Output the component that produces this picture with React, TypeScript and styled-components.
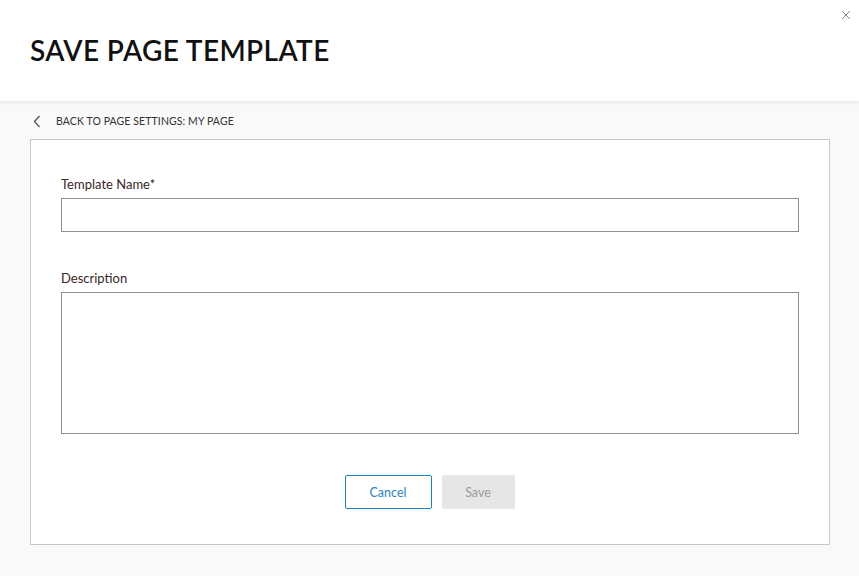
import React from "react";
import styled, { createGlobalStyle } from "styled-components";

const Global = createGlobalStyle`
  html, body { margin: 0; padding: 0; background: #f9f9f9; }
  body { font-family: Lato, "Liberation Sans", sans-serif; }
  * { box-sizing: border-box; }
`;

const Page = styled.div`
  width: 859px;
  height: 576px;
  display: flex;
  flex-direction: column;
  background: #f9f9f9;
  position: relative;
`;

const Header = styled.header`
  height: 102px;
  background: #ffffff;
  box-shadow: 0 1px 2px rgba(0, 0, 0, 0.08);
  border-bottom: 1px solid #ececec;
  display: flex;
  align-items: center;
  padding: 0 30px 2px;
`;

const Title = styled.h1`
  margin: 0;
  font-family: Lato, "Liberation Sans", sans-serif;
  font-weight: 600;
  font-size: 28px;
  letter-spacing: 0.4px;
  color: #111;
`;

const Close = styled.button`
  position: absolute;
  top: 9px;
  right: 7px;
  width: 12px;
  height: 12px;
  padding: 0;
  border: none;
  background: none;
  display: flex;
  align-items: center;
  justify-content: center;
  cursor: pointer;
`;

const Body = styled.main`
  padding: 0 29px 31px 30px;
  display: flex;
  flex-direction: column;
  flex: 1;
`;

const BackRow = styled.div`
  height: 37px;
  display: flex;
  align-items: center;
  gap: 15px;
  padding-left: 3px;
  padding-top: 1px;
`;

const BackText = styled.span`
  font-family: Lato, "Liberation Sans", sans-serif;
  font-size: 10.5px;
  color: #333;
  letter-spacing: 0.1px;
`;

const Card = styled.section`
  flex: 1;
  background: #fff;
  border: 1px solid #c8c8c8;
  padding: 37px 30px 0;
  display: flex;
  flex-direction: column;
`;

const Field = styled.div<{ $gap?: number }>`
  display: flex;
  flex-direction: column;
  margin-bottom: ${(p) => p.$gap ?? 0}px;
`;

const Label = styled.label`
  font-family: Lato, "Liberation Sans", sans-serif;
  font-size: 13px;
  color: #3a2626;
  margin-bottom: 7px;
  line-height: 14px;
`;

const Input = styled.input`
  height: 34px;
  border: 1px solid #8f8f8f;
  background: #fff;
  outline: none;
`;

const TextArea = styled.textarea`
  height: 142px;
  border: 1px solid #8f8f8f;
  resize: none;
  outline: none;
`;

const Actions = styled.div`
  display: flex;
  justify-content: center;
  gap: 10px;
  margin-top: 41px;
  padding-right: 1px;
`;

const Btn = styled.button<{ $primary?: boolean }>`
  height: 34px;
  border-radius: 2px;
  font-family: Lato, "Liberation Sans", sans-serif;
  font-size: 12.5px;
  cursor: pointer;
  border: 1px solid ${(p) => (p.$primary ? "#e5e6e6" : "#1b82c1")};
  background: ${(p) => (p.$primary ? "#e5e6e6" : "#fff")};
  color: ${(p) => (p.$primary ? "#9b9b9b" : "#2f7fbf")};
  width: ${(p) => (p.$primary ? 73 : 87)}px;
`;

export default function App() {
  return (
    <Page>
      <Global />
      <Header>
        <Title>SAVE PAGE TEMPLATE</Title>
      </Header>
      <Close aria-label="Close">
        <svg width="10" height="10" viewBox="0 0 10 10">
          <path d="M1 1 L9 9 M9 1 L1 9" stroke="#8a8a8a" strokeWidth="1" />
        </svg>
      </Close>
      <Body>
        <BackRow>
          <svg width="8" height="13" viewBox="0 0 8 13">
            <path d="M6.5 1 L1.5 6.5 L6.5 12" stroke="#555" strokeWidth="1.3" fill="none" />
          </svg>
          <BackText>BACK TO PAGE SETTINGS: MY PAGE</BackText>
        </BackRow>
        <Card>
          <Field $gap={39}>
            <Label>Template Name*</Label>
            <Input />
          </Field>
          <Field>
            <Label>Description</Label>
            <TextArea />
          </Field>
          <Actions>
            <Btn>Cancel</Btn>
            <Btn $primary>Save</Btn>
          </Actions>
        </Card>
      </Body>
    </Page>
  );
}
